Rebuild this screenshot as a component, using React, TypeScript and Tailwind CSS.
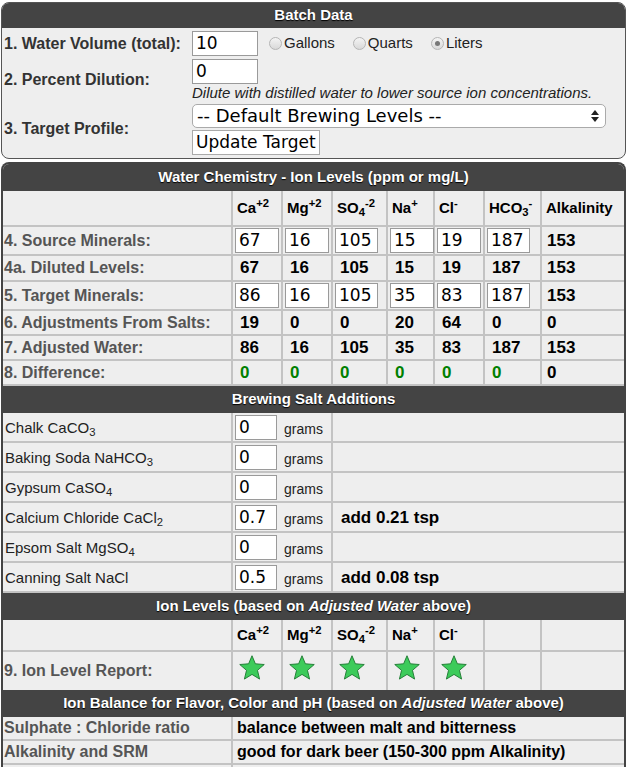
import React from 'react';

const grid = 'border-[#c3c3c3]';

function Star() {
    return (
        <svg width="28" height="28" viewBox="0 0 24 24">
            <polygon
                points="12,1.5 14.9,8.4 22.5,9 16.7,14 18.5,21.5 12,17.5 5.5,21.5 7.3,14 1.5,9 9.1,8.4"
                fill="#3ccb5a"
                stroke="#1f7a33"
                strokeWidth="0.8"
                strokeLinejoin="round"
            />
        </svg>
    );
}

function Radio({ checked, label }: { checked?: boolean; label: string }) {
    return (
        <span className="flex items-center mr-[18px]">
            <span className="w-[13px] h-[13px] rounded-full border border-[#b5b5b5] bg-gradient-to-b from-[#f4f4f4] to-[#d9d9d9] flex items-center justify-center mr-[2px]">
                {checked && <span className="w-[5px] h-[5px] rounded-full bg-[#777]" />}
            </span>
            <span className="text-[15px] text-[#222]">{label}</span>
        </span>
    );
}

function NumInput({ value, w = 'w-[44px]' }: { value: string; w?: string }) {
    return (
        <input
            defaultValue={value}
            className={`${w} h-[25px] border border-[#9a9a9a] bg-white px-[3px] text-[17px] font-normal text-black font-['DejaVu_Sans',sans-serif] outline-none`}
        />
    );
}

function Bar({ children }: { children: React.ReactNode }) {
    return (
        <div className="h-[27px] bg-[#444] text-white font-bold text-[15px] flex items-center justify-center [text-shadow:0_1px_1px_#000]">
            {children}
        </div>
    );
}

const ionWidths = ['w-[50px]', 'w-[50px]', 'w-[55px]', 'w-[47px]', 'w-[50px]', 'w-[57px]'];

function IonHead({ last = 'Alkalinity', blanks = false }: { last?: string; blanks?: boolean }) {
    const heads: React.ReactNode[] = [
        <>Ca<sup>+2</sup></>,
        <>Mg<sup>+2</sup></>,
        <>SO<sub>4</sub><sup>-2</sup></>,
        <>Na<sup>+</sup></>,
        <>Cl<sup>-</sup></>,
        blanks ? null : <>HCO<sub>3</sub><sup>-</sup></>,
    ];
    return (
        <>
            {heads.map((h, i) => (
                <div key={i} className={`${ionWidths[i]} border-r-2 ${grid} flex items-center pl-[4px] text-[15px] font-bold text-black`}>
                    <span>{h}</span>
                </div>
            ))}
            <div className="flex-1 flex items-center pl-[4px] text-[15px] font-bold text-black">{blanks ? '' : last}</div>
        </>
    );
}

type ChemRow = { label: string; h: string; input?: boolean; vals: string[]; alk: string; green?: boolean };

const chemRows: ChemRow[] = [
    { label: '4. Source Minerals:', h: 'h-[29px]', input: true, vals: ['67', '16', '105', '15', '19', '187'], alk: '153' },
    { label: '4a. Diluted Levels:', h: 'h-[26px]', vals: ['67', '16', '105', '15', '19', '187'], alk: '153' },
    { label: '5. Target Minerals:', h: 'h-[29px]', input: true, vals: ['86', '16', '105', '35', '83', '187'], alk: '153' },
    { label: '6. Adjustments From Salts:', h: 'h-[25px]', vals: ['19', '0', '0', '20', '64', '0'], alk: '0' },
    { label: '7. Adjusted Water:', h: 'h-[25px]', vals: ['86', '16', '105', '35', '83', '187'], alk: '153' },
    { label: '8. Difference:', h: 'h-[25px]', vals: ['0', '0', '0', '0', '0', '0'], alk: '0', green: true },
];

const salts: { name: React.ReactNode; g: string; note?: string }[] = [
    { name: <>Chalk CaCO<sub>3</sub></>, g: '0' },
    { name: <>Baking Soda NaHCO<sub>3</sub></>, g: '0' },
    { name: <>Gypsum CaSO<sub>4</sub></>, g: '0' },
    { name: <>Calcium Chloride CaCl<sub>2</sub></>, g: '0.7', note: 'add 0.21 tsp' },
    { name: <>Epsom Salt MgSO<sub>4</sub></>, g: '0' },
    { name: <>Canning Salt NaCl</>, g: '0.5', note: 'add 0.08 tsp' },
];

export default function App() {
    return (
        <div className="w-[627px] min-h-[767px] bg-white font-['Liberation_Sans',Arial,sans-serif] overflow-hidden">
            {/* Batch Data */}
            <div className="mx-[1px] mt-[2px] rounded-[8px] border border-[#555] bg-[#eee] overflow-hidden">
                <div className="h-[25px] bg-[#444] text-white font-bold text-[15px] flex items-center justify-center [text-shadow:0_1px_1px_#000]">
                    Batch Data
                </div>
                <div className="flex items-center h-[30px] pt-[1px]">
                    <div className="w-[190px] pl-[2px] text-[16px] font-bold text-[#333]">1. Water Volume (total):</div>
                    <NumInput value="10" w="w-[66px]" />
                    <div className="flex items-center ml-[11px]">
                        <Radio label="Gallons" />
                        <Radio label="Quarts" />
                        <Radio label="Liters" checked />
                    </div>
                </div>
                <div className="flex items-center h-[44px]">
                    <div className="w-[190px] pl-[2px] text-[16px] font-bold text-[#333]">2. Percent Dilution:</div>
                    <div className="flex flex-col">
                        <NumInput value="0" w="w-[66px]" />
                        <div className="text-[15px] italic text-[#222] leading-[17px]">
                            Dilute with distilled water to lower source ion concentrations.
                        </div>
                    </div>
                </div>
                <div className="flex items-center h-[56px] pb-[2px]">
                    <div className="w-[190px] pl-[2px] text-[16px] font-bold text-[#333]">3. Target Profile:</div>
                    <div className="flex flex-col gap-[2px]">
                        <div className="w-[414px] h-[24px] rounded-[5px] border border-[#aaa] bg-white flex items-center justify-between pl-[4px] pr-[6px] font-['DejaVu_Sans',sans-serif] text-[18px] text-black">
                            <span>-- Default Brewing Levels --</span>
                            <span className="flex flex-col items-center gap-[2px]">
                                <span className="w-0 h-0 border-x-[4px] border-x-transparent border-b-[5px] border-b-[#222]" />
                                <span className="w-0 h-0 border-x-[4px] border-x-transparent border-t-[5px] border-t-[#222]" />
                            </span>
                        </div>
                        <button className="w-[128px] h-[25px] border border-[#aaa] bg-white text-left pl-[3px] font-['DejaVu_Sans',sans-serif] text-[17px] leading-[20px] text-black">
                            Update Target
                        </button>
                    </div>
                </div>
            </div>

            {/* Water chemistry and the rest */}
            <div className="mx-[1px] mt-[3px] rounded-t-[8px] border-x-2 border-t-2 border-[#444] overflow-hidden bg-[#eee]">
                <Bar>Water Chemistry - Ion Levels (ppm or mg/L)</Bar>
                <div className={`flex h-[36px] border-b-2 ${grid}`}>
                    <div className={`w-[230px] border-r-2 ${grid}`} />
                    <IonHead />
                </div>
                {chemRows.map((r) => (
                    <div key={r.label} className={`flex ${r.h} border-b-2 ${grid}`}>
                        <div className={`w-[230px] border-r-2 ${grid} flex items-center pl-[1px] text-[16px] font-bold text-[#555]`}>
                            {r.label}
                        </div>
                        {r.vals.map((v, i) => (
                            <div
                                key={i}
                                className={`${ionWidths[i]} border-r-2 ${grid} flex items-center ${r.input ? 'pl-[2px]' : 'pl-[7px]'} text-[17px] font-bold ${r.green ? 'text-[#008000]' : 'text-black'}`}
                            >
                                {r.input ? <NumInput value={v} w={i === 2 || i === 5 ? 'w-[43px]' : 'w-[44px]'} /> : v}
                            </div>
                        ))}
                        <div className="flex-1 flex items-center pl-[5px] text-[17px] font-bold text-black">{r.alk}</div>
                    </div>
                ))}

                <Bar>Brewing Salt Additions</Bar>
                {salts.map((s, i) => (
                    <div key={i} className={`flex h-[30px] border-b-2 ${grid}`}>
                        <div className={`w-[230px] border-r-2 ${grid} flex items-center pl-[2px] pt-[2px] text-[15px] text-[#222]`}>
                            <span>{s.name}</span>
                        </div>
                        <div className={`w-[100px] border-r-2 ${grid} flex items-center pl-[2px] pt-[1px]`}>
                            <NumInput value={s.g} w="w-[42px]" />
                            <span className="ml-[7px] mt-[4px] text-[14px] text-[#222]">grams</span>
                        </div>
                        <div className="flex-1 flex items-center pl-[8px] pt-[1px] text-[17px] font-bold text-black">{s.note}</div>
                    </div>
                ))}

                <Bar>
                    Ion Levels (based on&nbsp;<i>Adjusted Water</i>&nbsp;above)
                </Bar>
                <div className={`flex h-[32px] border-b-2 ${grid}`}>
                    <div className={`w-[230px] border-r-2 ${grid}`} />
                    <IonHead blanks />
                </div>
                <div className="flex h-[38px]">
                    <div className={`w-[230px] border-r-2 ${grid} flex items-center pl-[1px] pb-[1px] text-[16px] font-bold text-[#555]`}>
                        9. Ion Level Report:
                    </div>
                    {ionWidths.map((w, i) => (
                        <div key={i} className={`${w} border-r-2 ${grid} flex items-center pl-[5px] pb-[6px]`}>
                            {i < 5 && <Star />}
                        </div>
                    ))}
                    <div className="flex-1" />
                </div>

                <Bar>
                    Ion Balance for Flavor, Color and pH (based on&nbsp;<i>Adjusted Water</i>&nbsp;above)
                </Bar>
                {[
                    ['Sulphate : Chloride ratio', 'balance between malt and bitterness'],
                    ['Alkalinity and SRM', 'good for dark beer (150-300 ppm Alkalinity)'],
                    ['', ''],
                ].map(([a, b], i) => (
                    <div key={i} className={`flex h-[24px] border-b-2 ${grid}`}>
                        <div className={`w-[230px] border-r-2 ${grid} flex items-center pl-[1px] text-[16px] font-bold text-[#555]`}>{a}</div>
                        <div className="flex-1 flex items-center pl-[4px] text-[16px] font-bold text-black">{b}</div>
                    </div>
                ))}
            </div>
        </div>
    );
}
